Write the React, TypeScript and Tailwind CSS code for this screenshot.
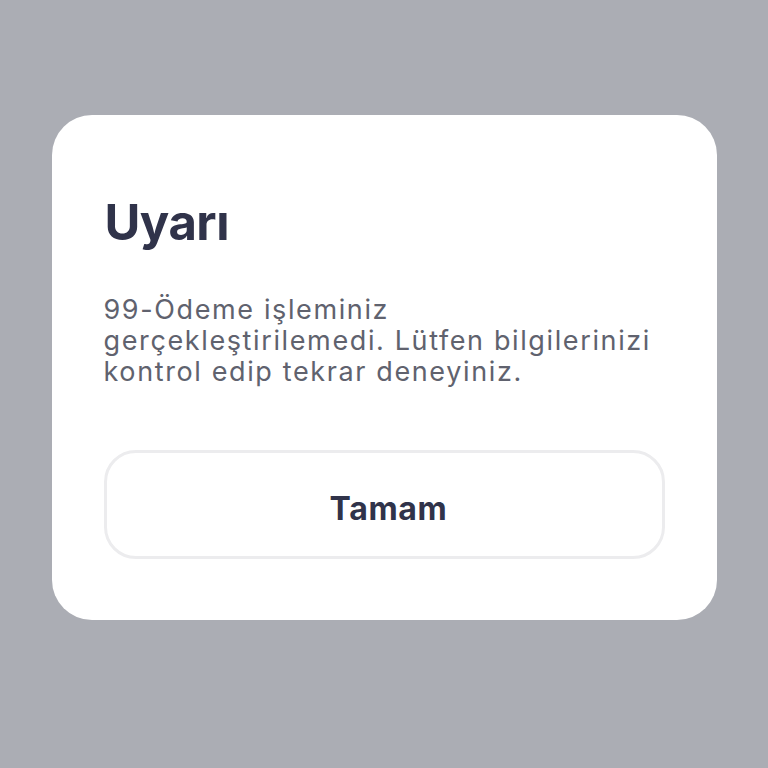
import React from "react";

export default function App() {
  return (
    <div className="min-h-screen w-full bg-[#abadb4] pt-[115px] font-['Inter',sans-serif]">
      {/* alert dialog */}
      <div className="mx-auto w-[665px] rounded-[40px] bg-white px-[52px] pt-[83px] pb-[61px]">
        <h2 className="pl-[1px] text-[49px] font-bold leading-none tracking-[-0.01em] text-[#30334a]">Uyarı</h2>
        <p className="mt-[47px] text-[27px] leading-[31px] font-normal tracking-[0.06em] text-[#60626e]">
          99-Ödeme işleminiz
          <br />
          gerçekleştirilemedi. Lütfen bilgilerinizi
          <br />
          kontrol edip tekrar deneyiniz.
        </p>
        <button className="mt-[63px] flex h-[109px] w-full items-center justify-center rounded-[32px] border-[3px] border-[#ececee] bg-white pt-[8px] pl-[9px] text-[32px] font-bold tracking-[0.02em] text-[#30334a]">
          Tamam
        </button>
      </div>
    </div>
  );
}
